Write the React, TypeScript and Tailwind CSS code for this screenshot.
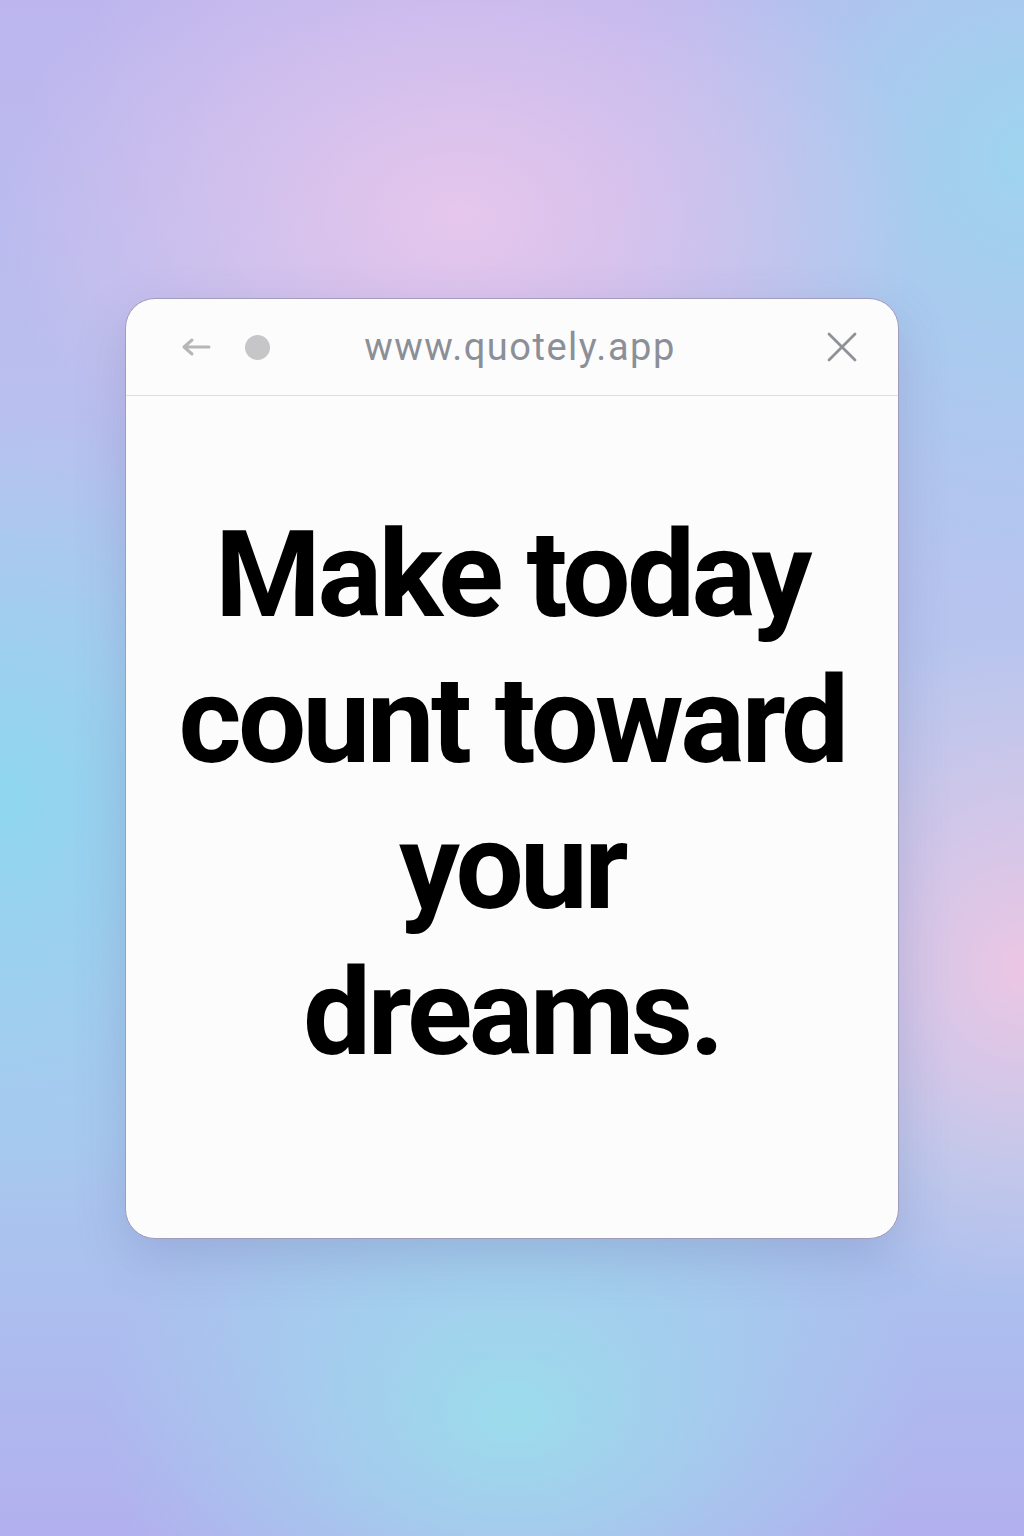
import React from "react";

export default function App() {
  return (
    <div className="relative w-[1024px] h-[1536px] overflow-hidden bg-[radial-gradient(ellipse_45%_22%_at_45%_14%,#e6c6ec_0%,rgba(230,198,236,0)_100%),radial-gradient(ellipse_35%_25%_at_0%_52%,#8ed6ee_0%,rgba(142,214,238,0)_100%),radial-gradient(ellipse_30%_22%_at_100%_63%,#ecc6e4_0%,rgba(236,198,228,0)_100%),radial-gradient(ellipse_40%_20%_at_50%_92%,#9cdcec_0%,rgba(156,220,236,0)_100%),radial-gradient(ellipse_40%_30%_at_100%_10%,#9ed4ee_0%,rgba(158,212,238,0)_100%),linear-gradient(180deg,#bdb6ee_0%,#b6c6ee_45%,#a8c8ee_75%,#b2b0ee_100%)] font-['Roboto',sans-serif]">
      <div className="absolute left-[125px] top-[298px] w-[774px] h-[941px] flex flex-col rounded-[30px] border border-[#a09cbc] bg-[#fdfcfc] shadow-[0_18px_50px_rgba(90,90,150,0.22)] overflow-hidden">
        <div className="h-[97px] shrink-0 flex items-center px-[54px] border-b border-[#e2dedd] relative">
          <svg width="32" height="20" viewBox="0 0 32 20">
            <path d="M29 10H5M12 3L4 10L12 17" fill="none" stroke="#b6b6b8" strokeWidth="3" strokeLinecap="round" strokeLinejoin="round" />
          </svg>
          <div className="ml-[33px] w-[25px] h-[25px] rounded-full bg-[#c6c6c8]" />
          <div className="flex-1 text-center text-[#8b8f97] text-[38px] tracking-[0.04em] pr-[56px]">
            www.quotely.app
          </div>
          <svg width="32" height="32" viewBox="0 0 32 32" className="mr-[-14px]">
            <path d="M3 3L29 29M29 3L3 29" fill="none" stroke="#8e9198" strokeWidth="2.8" strokeLinecap="round" />
          </svg>
        </div>
        <div className="flex-1 flex flex-col items-center pt-[106px]">
          <div className="text-center text-black font-bold text-[121px] leading-[146px] tracking-[-0.03em]">
            <div>Make today</div>
            <div>count toward</div>
            <div>your</div>
            <div>dreams.</div>
          </div>
        </div>
      </div>
    </div>
  );
}
